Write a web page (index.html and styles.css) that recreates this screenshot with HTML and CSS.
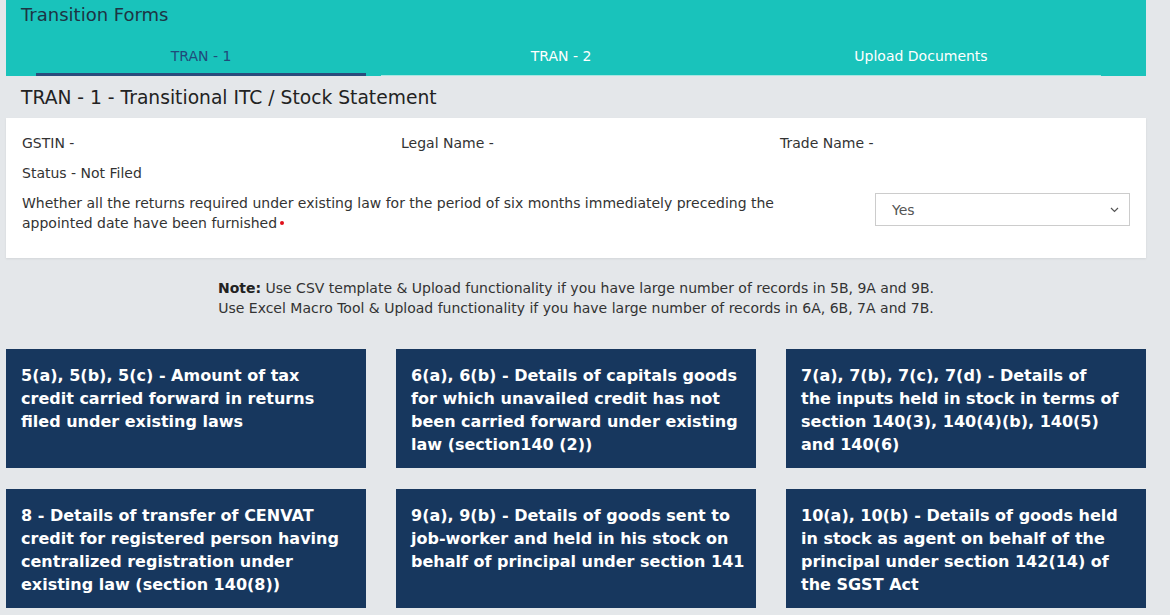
FILE: index.html
```html
<!DOCTYPE html>
<html>
<head>
<meta charset="utf-8">
<link rel="stylesheet" href="styles.css">
</head>
<body>
<div class="page">
  <div class="banner">
    <div class="banner-title">Transition Forms</div>
    <div class="tabs">
      <div class="tab active"><span>TRAN - 1</span></div>
      <div class="tab"><span>TRAN - 2</span></div>
      <div class="tab"><span>Upload Documents</span></div>
    </div>
  </div>
  <h2 class="page-title">TRAN - 1 - Transitional ITC / Stock Statement</h2>
  <div class="info-card">
    <div class="info-row">
      <div>GSTIN -</div>
      <div>Legal Name -</div>
      <div>Trade Name -</div>
    </div>
    <div class="status">Status - Not Filed</div>
    <div class="question">
      <div class="q-text">Whether all the returns required under existing law for the period of six months immediately preceding the appointed date have been furnished<span class="req"></span></div>
      <div class="select">
        <span>Yes</span>
        <svg class="chev" width="9" height="6" viewBox="0 0 9 6"><path d="M1 1l3.5 3.5L8 1" fill="none" stroke="#555" stroke-width="1.2"/></svg>
      </div>
    </div>
  </div>
  <div class="note">
    <div><b>Note:</b> Use CSV template &amp; Upload functionality if you have large number of records in 5B, 9A and 9B.</div>
    <div>Use Excel Macro Tool &amp; Upload functionality if you have large number of records in 6A, 6B, 7A and 7B.</div>
  </div>
  <div class="tiles">
    <div class="tile">5(a), 5(b), 5(c) - Amount of tax credit carried forward in returns filed under existing laws</div>
    <div class="tile">6(a), 6(b) - Details of capitals goods for which unavailed credit has not been carried forward under existing law (section140 (2))</div>
    <div class="tile">7(a), 7(b), 7(c), 7(d) - Details of<br>the inputs held in stock in terms of section 140(3), 140(4)(b), 140(5) and 140(6)</div>
    <div class="tile">8 - Details of transfer of CENVAT credit for registered person having centralized registration under existing law (section 140(8))</div>
    <div class="tile">9(a), 9(b) - Details of goods sent to job-worker and held in his stock on behalf of principal under section 141</div>
    <div class="tile">10(a), 10(b) - Details of goods held<br>in stock as agent on behalf of the principal under section 142(14) of the SGST Act</div>
  </div>
</div>
</body>
</html>
```
FILE: styles.css
```css
html, body {
  margin: 0;
  padding: 0;
  background: #e4e7ea;
  font-family: "DejaVu Sans", sans-serif;
  color: #333;
  font-size: 14px;
}
.page {
  width: 1140px;
  margin-left: 6px;
}
.banner {
  background: #19c3bb;
  height: 76px;
  display: flex;
  flex-direction: column;
}
.banner-title {
  font-size: 18px;
  color: #1d3444;
  padding: 4px 15px 0;
  height: 28px;
  line-height: 22px;
}
.tabs {
  display: grid;
  grid-template-columns: 360px 360px 360px;
  padding-left: 15px;
  flex: 1;
}
.tab {
  display: flex;
  justify-content: center;
  align-items: center;
  color: #fff;
  font-size: 14px;
  padding-top: 4px;
  border-bottom: 1px solid #a8e6e1;
}
.tab.active {
  color: #204a7a;
  margin: 0 15px;
  border-bottom: 3px solid #2a4c7c;
  padding-top: 6px;
}
.page-title {
  font-weight: normal;
  font-size: 18.7px;
  color: #222;
  margin: 0;
  padding: 10px 15px 0;
  height: 32px;
  line-height: 24px;
}
.info-card {
  background: #fff;
  height: 140px;
  box-sizing: border-box;
  padding: 15px 16px 0;
  box-shadow: 0 1px 2px rgba(0,0,0,0.08);
}
.info-row {
  display: grid;
  grid-template-columns: 379px 379px 1fr;
  line-height: 20px;
}
.status {
  margin-top: 10px;
  line-height: 20px;
}
.question {
  display: flex;
  justify-content: space-between;
  align-items: flex-start;
  margin-top: 10px;
  line-height: 20px;
}
.q-text {
  width: 790px;
}
.req {
  display: inline-block;
  width: 4px;
  height: 4px;
  border-radius: 50%;
  background: #e0101a;
  margin-left: 3px;
  vertical-align: 3px;
}
.select {
  width: 255px;
  height: 33px;
  box-sizing: border-box;
  border: 1px solid #ccc;
  display: flex;
  align-items: center;
  justify-content: space-between;
  padding: 0 10px 0 16px;
  color: #555;
}
.note {
  text-align: center;
  line-height: 20px;
  padding-top: 20px;
  height: 71px;
  color: #333;
}
.note b { color: #222; }
.tiles {
  display: grid;
  grid-template-columns: 360px 360px 360px;
  grid-auto-rows: 119px;
  column-gap: 30px;
  row-gap: 21px;
}
.tile {
  background: #17375e;
  color: #fff;
  font-weight: bold;
  font-size: 16px;
  line-height: 23px;
  padding: 15px 11px 0 15px;
}
```
